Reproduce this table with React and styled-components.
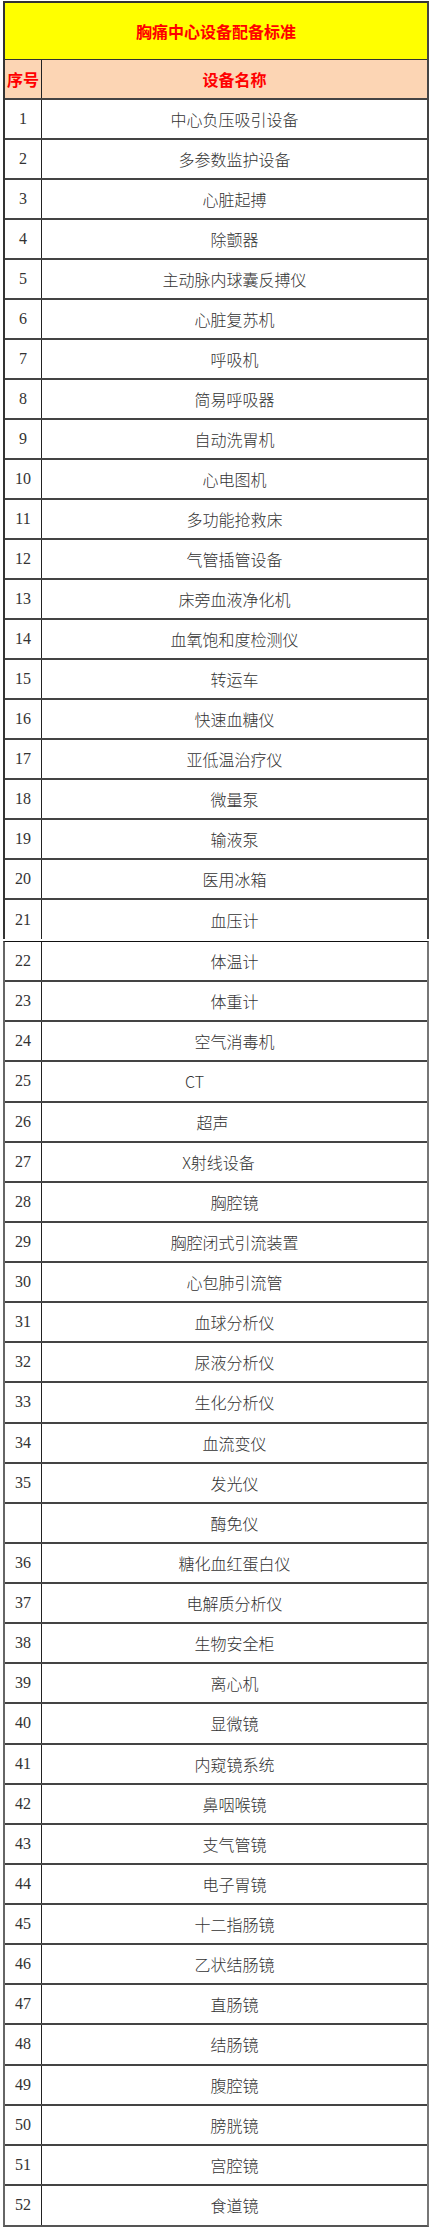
import React from "react";
import styled, { createGlobalStyle } from "styled-components";

const GlobalStyle = createGlobalStyle`
    html, body {
        margin: 0;
        padding: 0;
        background: #ffffff;
    }
`;

const upperItems = [
    ["1", "中心负压吸引设备"],
    ["2", "多参数监护设备"],
    ["3", "心脏起搏"],
    ["4", "除颤器"],
    ["5", "主动脉内球囊反搏仪"],
    ["6", "心脏复苏机"],
    ["7", "呼吸机"],
    ["8", "简易呼吸器"],
    ["9", "自动洗胃机"],
    ["10", "心电图机"],
    ["11", "多功能抢救床"],
    ["12", "气管插管设备"],
    ["13", "床旁血液净化机"],
    ["14", "血氧饱和度检测仪"],
    ["15", "转运车"],
    ["16", "快速血糖仪"],
    ["17", "亚低温治疗仪"],
    ["18", "微量泵"],
    ["19", "输液泵"],
    ["20", "医用冰箱"],
    ["21", "血压计"],
];

// third value: how far the text sits left of centre in the source sheet
const lowerItems = [
    ["22", "体温计"],
    ["23", "体重计"],
    ["24", "空气消毒机"],
    ["25", "CT", 40],
    ["26", "超声", 22],
    ["27", "X射线设备", 16],
    ["28", "胸腔镜"],
    ["29", "胸腔闭式引流装置"],
    ["30", "心包肺引流管"],
    ["31", "血球分析仪"],
    ["32", "尿液分析仪"],
    ["33", "生化分析仪"],
    ["34", "血流变仪"],
    ["35", "发光仪"],
    ["", "酶免仪"],
    ["36", "糖化血红蛋白仪"],
    ["37", "电解质分析仪"],
    ["38", "生物安全柜"],
    ["39", "离心机"],
    ["40", "显微镜"],
    ["41", "内窥镜系统"],
    ["42", "鼻咽喉镜"],
    ["43", "支气管镜"],
    ["44", "电子胃镜"],
    ["45", "十二指肠镜"],
    ["46", "乙状结肠镜"],
    ["47", "直肠镜"],
    ["48", "结肠镜"],
    ["49", "腹腔镜"],
    ["50", "膀胱镜"],
    ["51", "宫腔镜"],
    ["52", "食道镜"],
];

const Page = styled.div`
    padding: 1px 1px 4px 3px;
    width: 430px;
    box-sizing: border-box;
`;

const Sheet = styled.div`
    width: 426px;
    box-sizing: border-box;
    border-top: 2px solid #333;
    border-left: 2px solid #333;
    border-right: 2px solid #444;
`;

const LowerSheet = styled.div`
    width: 426px;
    margin-top: 2px;
    box-sizing: border-box;
    border-top: 1px solid #111;
    border-left: 2px solid #666;
    border-right: 2px solid #777;
    border-bottom: 2px solid #555;
`;

const Title = styled.div`
    height: 56px;
    background: #ffff00;
    border-bottom: 1px solid #333;
    display: flex;
    align-items: center;
    justify-content: center;
    color: #ff0000;
    font-family: "Noto Sans CJK SC", sans-serif;
    font-weight: 700;
    font-size: 16px;
`;

const Row = styled.div`
    display: grid;
    grid-template-columns: 37px 1fr;
    height: ${p => p.$height || 38}px;
    background: ${p => p.$bg || "#ffffff"};
    border-bottom: ${p => (p.$last ? "none" : "2px solid #444")};
`;

const NumCell = styled.div`
    display: flex;
    align-items: center;
    justify-content: center;
    border-right: 1px solid #222;
    font-family: "Liberation Serif", "Noto Sans CJK SC", serif;
    font-size: 16px;
    color: #333;
`;

const NameCell = styled.div`
    display: flex;
    align-items: center;
    justify-content: center;
    padding-right: ${p => (p.$shift || 0) * 2}px;
    font-family: "Noto Sans CJK SC", sans-serif;
    font-weight: 300;
    font-size: 16px;
    color: #333;
`;

const HeadNum = styled(NumCell)`
    font-family: "Noto Sans CJK SC", sans-serif;
    font-weight: 700;
    color: #ff0000;
`;

const HeadName = styled(NameCell)`
    font-weight: 700;
    color: #ff0000;
`;

const ItemRow = ({ num, name, shift, last, height }) => (
    <Row $last={last} $height={last ? height + 1 : height}>
        <NumCell>{num}</NumCell>
        <NameCell $shift={shift}>{name}</NameCell>
    </Row>
);

const App = () => {
    return (
        <Page>
            <GlobalStyle />
            <Sheet>
                <Title>胸痛中心设备配备标准</Title>
                <Row $bg="#fcd5b4">
                    <HeadNum>序号</HeadNum>
                    <HeadName>设备名称</HeadName>
                </Row>
                {upperItems.map(([num, name], i) => (
                    <ItemRow key={num} num={num} name={name} height={38} last={i === upperItems.length - 1} />
                ))}
            </Sheet>
            <LowerSheet>
                {lowerItems.map(([num, name, shift], i) => (
                    <ItemRow key={name} num={num} name={name} shift={shift} height={38.125} last={i === lowerItems.length - 1} />
                ))}
            </LowerSheet>
        </Page>
    );
};

export default App;
